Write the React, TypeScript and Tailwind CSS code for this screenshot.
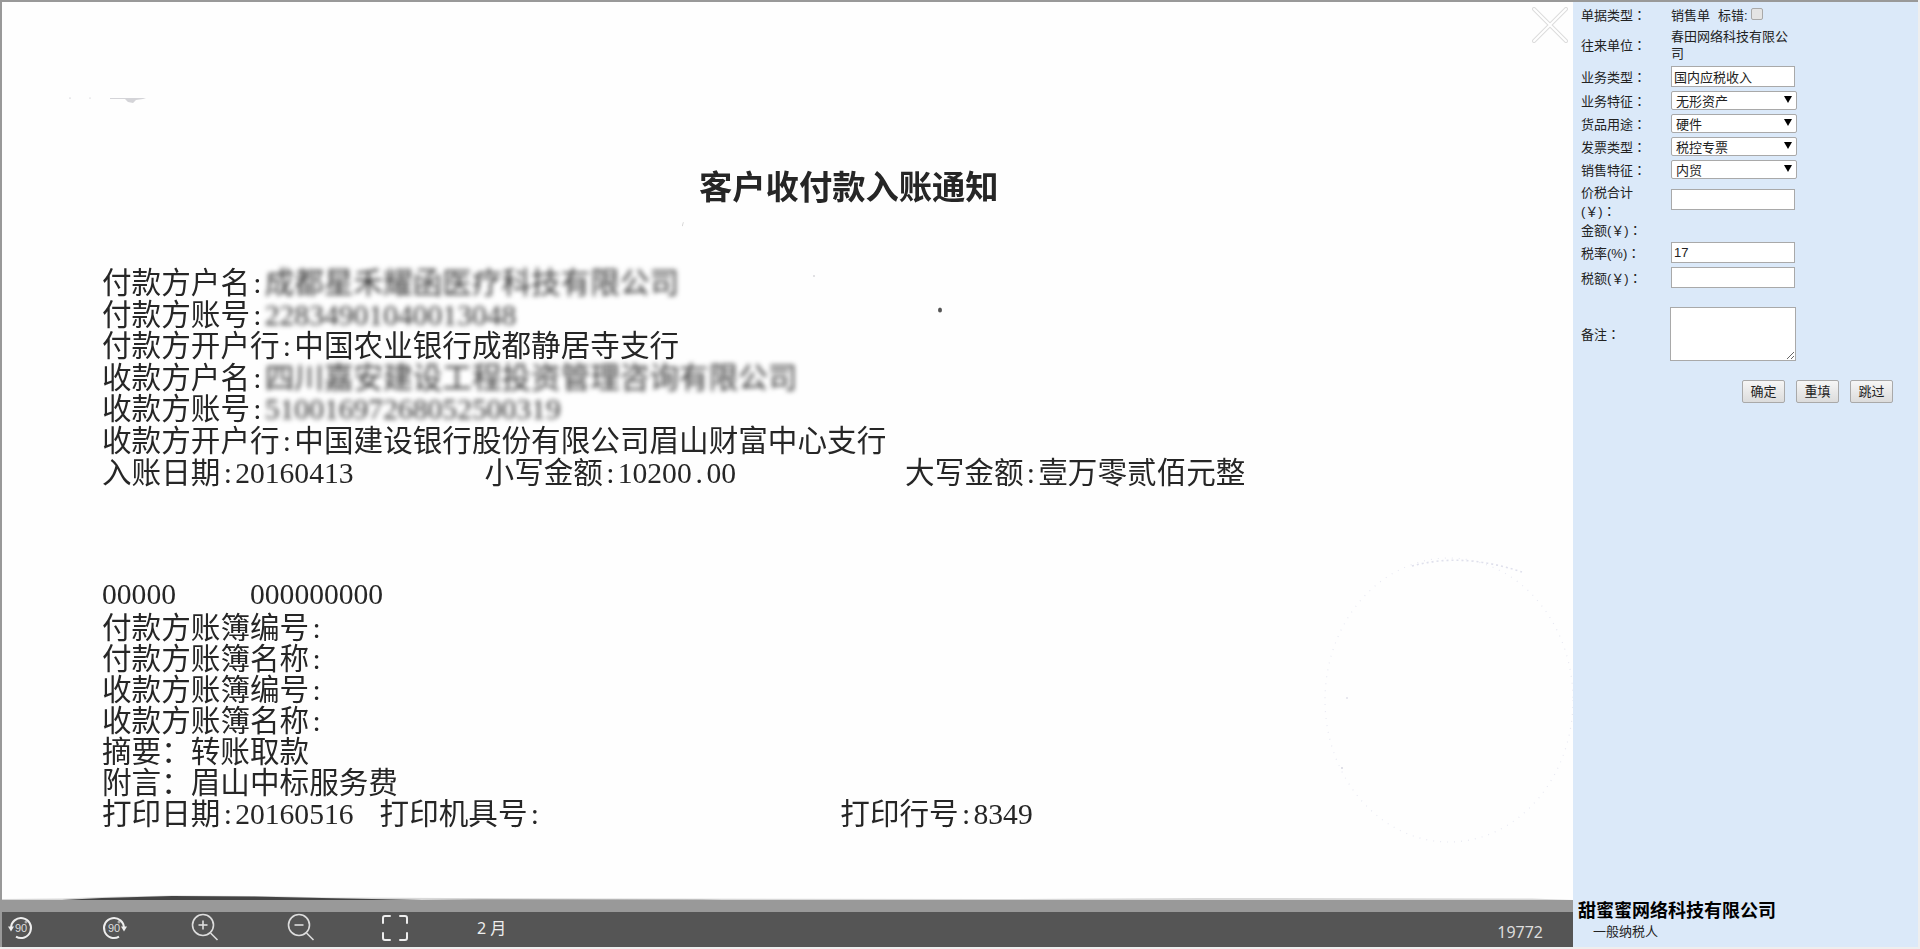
import React from 'react';

const sansFont = "[font-family:'Liberation_Sans','Noto_Sans_CJK_SC',sans-serif]";

// Half-width characters on the printed slip are all one cell wide
const Printed = ({ text }: { text: string }) => (
  <>
    {text.split('').map((ch, i) =>
      ch.charCodeAt(0) < 128 ? (
        <span key={i} className="inline-block w-[14.8px] text-center">{ch}</span>
      ) : (
        <span key={i}>{ch}</span>
      )
    )}
  </>
);

const SlipLine = ({ children, tall }: { children: React.ReactNode; tall?: boolean }) => (
  <div className={tall ? 'h-[31.6px] leading-[31.6px] whitespace-nowrap' : 'h-[31px] leading-[31px] whitespace-nowrap'}>
    {children}
  </div>
);

const Blurred = ({ text }: { text: string }) => (
  <span className="inline-block blur-[2.5px] text-[#333]"><Printed text={text} /></span>
);

const ScanMarks = () => (
  <svg className="absolute inset-0 pointer-events-none" width="1571" height="898" viewBox="0 0 1571 898">
    <g fill="#b0b0b8">
      <ellipse cx="938" cy="308" rx="2" ry="2.5" fill="#555" />
      <circle cx="812" cy="274" r="0.7" />
      <path d="M680 224l1-4 .6.3-.8 4z" fill="#ccc" />
      <path d="M108 96h36l-3 1-7 1-3 3-5-1-3-3-15 0z" fill="#d4d4d8" />
      <circle cx="68" cy="96" r="0.6" />
      <circle cx="88" cy="96" r="0.5" />
      <circle cx="1345" cy="696" r="0.8" fill="#ccd" />
      <circle cx="1340" cy="766" r="0.8" fill="#bbc" />
    </g>
    <ellipse cx="1447" cy="698" rx="124" ry="142" fill="none" stroke="#e8e9f2" strokeWidth="1.2" strokeDasharray="1 6" />
    <path d="M1410 564Q1460 550 1520 570" fill="none" stroke="#dfe0ec" strokeWidth="1.6" strokeDasharray="2 3" />
    <path d="M0 897L60 896.5L100 895L170 893.5L260 894L330 895.5L600 896.5L1000 897L1200 896L1530 896.5L1571 898H0Z" fill="#d8d8d8" />
    <path d="M60 898L100 896L170 894L250 894.5L320 896L420 898Z" fill="#444444" />
    <path d="M420 898L480 897L700 897.5L720 898Z" fill="#aaaaaa" />
  </svg>
);

const CloseMark = () => (
  <svg className="absolute right-[5px] top-[5px]" width="36" height="36" viewBox="0 0 36 36" fill="none">
    <path d="M2 2L34 34M34 2L2 34" stroke="#dcdcdc" strokeWidth="4" strokeLinecap="round" />
    <path d="M2 2L34 34M34 2L2 34" stroke="#ffffff" strokeWidth="2" strokeLinecap="round" />
  </svg>
);

const RotateIcon = ({ right }: { right?: boolean }) => (
  <svg width="26" height="26" viewBox="0 0 26 26" fill="none">
    <path d={right ? 'M23 13A10 10 0 1 0 18 21.7' : 'M3 13A10 10 0 1 1 8 21.7'} stroke="#eeeeee" strokeWidth="2" />
    <path d={right ? 'M20 11.5H26L23 16.5Z' : 'M0 11.5H6L3 16.5Z'} fill="#eeeeee" />
    <text x="13" y="17" textAnchor="middle" fontSize="11" fill="#dddddd" fontFamily="Liberation Sans, sans-serif">90</text>
    <circle cx="18" cy="7" r="1" stroke="#dddddd" strokeWidth="0.8" />
  </svg>
);

const ZoomIcon = ({ plus }: { plus?: boolean }) => (
  <svg width="28" height="28" viewBox="0 0 28 28" fill="none" stroke="#dddddd" strokeWidth="1.6">
    <circle cx="12" cy="12" r="10.5" />
    <path d="M19.5 20L26.5 27" />
    <path d="M7.5 12H16.5" />
    {plus && <path d="M12 7.5V16.5" />}
  </svg>
);

const FullscreenIcon = () => (
  <svg width="26" height="26" viewBox="0 0 26 26" fill="none" stroke="#eeeeee" strokeWidth="2" strokeLinecap="round">
    <path d="M1 8V3Q1 1 3 1H8M18 1H23Q25 1 25 3V8M25 18V23Q25 25 23 25H18M8 25H3Q1 25 1 23V18" />
  </svg>
);

// The form's colons sit mid-cell, which is the TC cut of the full-width colon
const Colon = () => <span className="[font-family:'Noto_Sans_CJK_TC',sans-serif]">：</span>;

const Row = ({ label, className, children }: { label: string; className: string; children?: React.ReactNode }) => (
  <div className={`flex items-center ${className}`}>
    <div className="w-[90px] shrink-0">{label}<Colon /></div>
    {children}
  </div>
);

const TextField = ({ value }: { value?: string }) => (
  <input
    defaultValue={value}
    className="block w-[124px] h-[21px] bg-white border border-[#a9a9a9] pl-[2px] text-[#222] outline-none"
  />
);

const SelectField = ({ value }: { value: string }) => (
  <div className="relative w-[126px] h-[19px]">
    <select className="block appearance-none w-full h-full bg-white border border-[#a9a9a9] rounded-[2px] pl-[4px] pt-[2px] text-[13px] leading-[15px] text-[#222] outline-none">
      <option>{value}</option>
    </select>
    <span className="absolute right-[5px] top-[5px] w-0 h-0 border-l-[4px] border-r-[4px] border-t-[7px] border-l-transparent border-r-transparent border-t-black" />
  </div>
);

const FormButton = ({ label }: { label: string }) => (
  <button className="w-[43px] h-[23px] bg-linear-to-b from-[#f6f6f6] to-[#dcdcdc] border border-[#a9a9a9] rounded-[2px] text-[13px] text-[#222]">
    {label}
  </button>
);

const App = () => {
  return (
    <div className={`w-[1920px] h-[949px] bg-[#eeeeee] overflow-hidden ${sansFont}`}>
      <div className="w-[1918px] h-[947px] flex border-t-2 border-l-2 border-[#999999]">
        <div className="w-[1571px] flex flex-col">
          {/* scanned slip */}
          <div className="relative h-[898px] bg-[#fefefe] overflow-hidden text-[29.6px] text-[#262626] [font-family:'Liberation_Serif','Noto_Sans_CJK_SC',serif]">
            <ScanMarks />
            <CloseMark />
            <div className="relative blur-[0.4px]">
              <div className="pt-[163px] pl-[697px] text-[33.3px] leading-[40px] font-bold [font-family:'Noto_Sans_CJK_SC',sans-serif]">
                客户收付款入账通知
              </div>
              <div className="pt-[63px] pl-[100px]">
                <SlipLine tall><Printed text="付款方户名:" /><Blurred text="成都星禾耀函医疗科技有限公司" /></SlipLine>
                <SlipLine tall><Printed text="付款方账号:" /><Blurred text="22834901040013048" /></SlipLine>
                <SlipLine tall><Printed text="付款方开户行:中国农业银行成都静居寺支行" /></SlipLine>
                <SlipLine tall><Printed text="收款方户名:" /><Blurred text="四川嘉安建设工程投资管理咨询有限公司" /></SlipLine>
                <SlipLine tall><Printed text="收款方账号:" /><Blurred text="51001697268052500319" /></SlipLine>
                <SlipLine tall><Printed text="收款方开户行:中国建设银行股份有限公司眉山财富中心支行" /></SlipLine>
                <SlipLine tall>
                  <Printed text="入账日期:20160413" />
                  <span className="ml-[131px]"><Printed text="小写金额:10200.00" /></span>
                  <span className="ml-[169px]"><Printed text="大写金额:壹万零贰佰元整" /></span>
                </SlipLine>
              </div>
              <div className="pt-[90px] pl-[100px]">
                <div className="h-[34px] leading-[31px] whitespace-nowrap">
                  <Printed text="00000" />
                  <span className="ml-[74px]"><Printed text="000000000" /></span>
                </div>
                <SlipLine><Printed text="付款方账簿编号:" /></SlipLine>
                <SlipLine><Printed text="付款方账簿名称:" /></SlipLine>
                <SlipLine><Printed text="收款方账簿编号:" /></SlipLine>
                <SlipLine><Printed text="收款方账簿名称:" /></SlipLine>
                <SlipLine>摘要：转账取款</SlipLine>
                <SlipLine>附言：眉山中标服务费</SlipLine>
                <SlipLine>
                  <Printed text="打印日期:20160516" />
                  <span className="ml-[26px]"><Printed text="打印机具号:" /></span>
                  <span className="ml-[298px]"><Printed text="打印行号:8349" /></span>
                </SlipLine>
              </div>
            </div>
          </div>
          <div className="h-[12px] bg-[#999999]" />
          {/* viewer toolbar */}
          <div className="h-[35px] bg-[#555555] flex items-center text-[16px] text-[#eeeeee] [font-family:'Noto_Sans','Noto_Sans_CJK_SC',sans-serif]">
            <div className="ml-[6px] mb-[4px]"><RotateIcon /></div>
            <div className="ml-[67px] mb-[4px]"><RotateIcon right /></div>
            <div className="ml-[64px] mb-[5px]"><ZoomIcon plus /></div>
            <div className="ml-[68px] mb-[5px]"><ZoomIcon /></div>
            <div className="ml-[67px] mb-[4px]"><FullscreenIcon /></div>
            <div className="ml-[69px] mb-[4px] w-[30px] whitespace-nowrap">2 月</div>
            <div className="ml-auto mr-[30px] mt-[5px] text-[#dddddd]">19772</div>
          </div>
        </div>

        {/* entry form */}
        <div className="w-[345px] bg-[#dbe9f9] flex flex-col justify-between pl-[8px] text-[13px] leading-[17px] text-[#222222]">
          <div>
            <Row label="单据类型" className="mt-[4px] h-[18px]">
              <span>销售单</span>
              <span className="ml-[8px]">标错:</span>
              <input type="checkbox" className="appearance-none w-[12px] h-[12px] ml-[3px] mb-[2px] bg-[#e4e4e4] border border-[#a9a9a9] rounded-[2px]" />
            </Row>
            <Row label="往来单位" className="mt-[4px] h-[34px]">
              <div className="w-[120px]">春田网络科技有限公司</div>
            </Row>
            <Row label="业务类型" className="mt-[4px] h-[21px]"><TextField value="国内应税收入" /></Row>
            <Row label="业务特征" className="mt-[4px] h-[19px]"><SelectField value="无形资产" /></Row>
            <Row label="货品用途" className="mt-[4px] h-[19px]"><SelectField value="硬件" /></Row>
            <Row label="发票类型" className="mt-[4px] h-[19px]"><SelectField value="税控专票" /></Row>
            <Row label="销售特征" className="mt-[4px] h-[19px]"><SelectField value="内贸" /></Row>
            <div className="flex mt-[5px] h-[36px] leading-[18px]">
              <div className="w-[90px] shrink-0">价税合计<br />(￥)<Colon /></div>
              <div className="mt-[5px]"><TextField /></div>
            </div>
            <Row label="金额(￥)" className="mt-[1px] h-[18px]" />
            <Row label="税率(%)" className="mt-[3px] h-[21px]"><TextField value="17" /></Row>
            <Row label="税额(￥)" className="mt-[4px] h-[21px]"><TextField /></Row>
            <Row label="备注" className="mt-[19px] h-[54px]">
              <textarea className="block -ml-[1px] w-[126px] h-[54px] bg-white border border-[#a9a9a9] outline-none" />
            </Row>
            <div className="flex justify-end gap-[11px] mt-[19px] pr-[25px]">
              <FormButton label="确定" />
              <FormButton label="重填" />
              <FormButton label="跳过" />
            </div>
          </div>
          <div className="-ml-[3px] pb-[7px]">
            <div className="text-[18px] leading-[24px] font-bold text-black">甜蜜蜜网络科技有限公司</div>
            <div className="ml-[15px] leading-[17px]">一般纳税人</div>
          </div>
        </div>
      </div>
    </div>
  );
};

export default App;
